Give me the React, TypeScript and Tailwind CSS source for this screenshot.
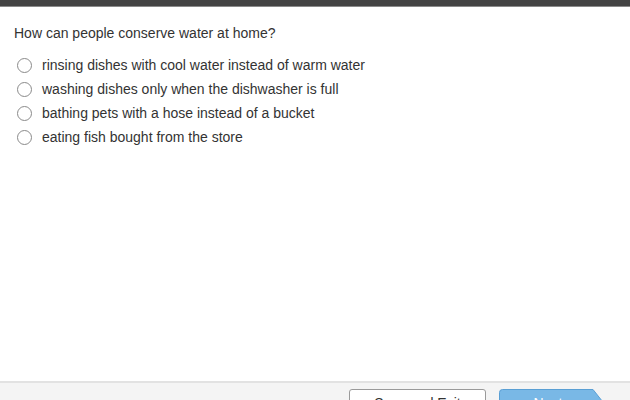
const options = [
  "rinsing dishes with cool water instead of warm water",
  "washing dishes only when the dishwasher is full",
  "bathing pets with a hose instead of a bucket",
  "eating fish bought from the store",
];

export default function App() {
  return (
    <div className="w-[630px] h-[400px] flex flex-col bg-white overflow-hidden font-['Liberation_Sans',Arial,sans-serif] text-[#333]">
      <div className="h-[6px] bg-[#434343] border-b border-[#8a8a8a] box-content" />
      <main className="flex-1 px-[14px] pt-[17px]">
        <p className="text-[14px] leading-[18px]">How can people conserve water at home?</p>
        <ul className="mt-[14px] flex flex-col gap-[6px]">
          {options.map((o) => (
            <li key={o} className="flex items-center h-[18px] gap-[10px] pl-[3px]">
              <span className="w-[15px] h-[15px] rounded-full border-[1.5px] border-[#8a8a8a] bg-white shrink-0" />
              <span className="text-[14px] leading-[18px]">{o}</span>
            </li>
          ))}
        </ul>
      </main>
      <footer className="h-[19px] bg-[#f4f4f4] border-t-2 border-[#e2e2e2] flex items-start justify-end gap-[13px] pr-[25px] pt-[6px]">
        <button className="w-[137px] h-[30px] rounded-[3px] border border-[#9a9a9a] bg-white text-[14px] text-[#333] pt-[4px] leading-[18px] flex justify-center">
          Save and Exit
        </button>
        <div className="relative w-[106px] h-[30px]">
          <svg className="absolute inset-0" width="106" height="30" viewBox="0 0 106 30">
            <path d="M3.5 0.5 H94 L105.5 15 L94 29.5 H3.5 Q0.5 29.5 0.5 26.5 V3.5 Q0.5 0.5 3.5 0.5 Z" fill="#79b8e6" stroke="#5a9fd4" />
          </svg>
          <span className="relative flex justify-center pt-[5px] pr-[8px] text-[14px] leading-[18px] text-white">Next</span>
        </div>
      </footer>
    </div>
  );
}
